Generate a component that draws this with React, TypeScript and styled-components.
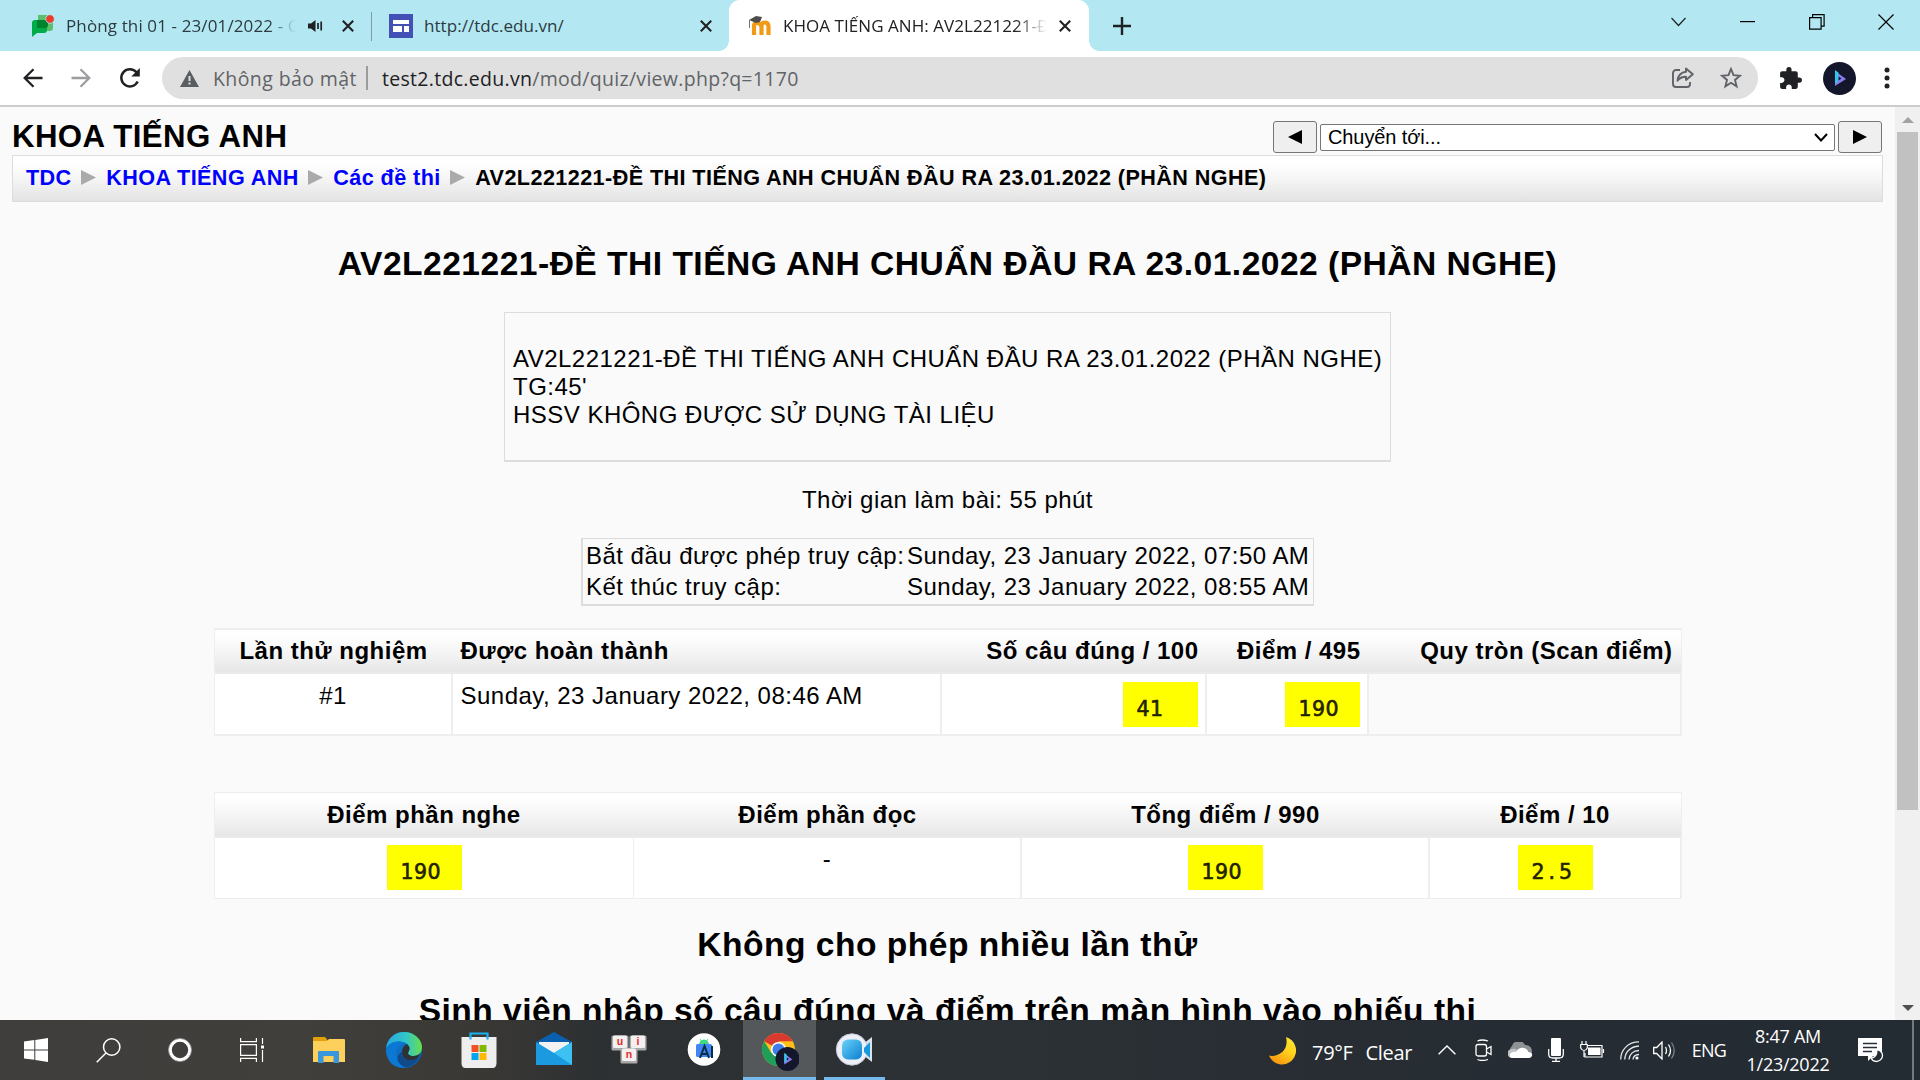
import React from "react";
import styled, { createGlobalStyle } from "styled-components";

const ARIAL = '"Liberation Sans", Arial, sans-serif';
const SEGOE = '"Open Sans", "Noto Sans", sans-serif';

const GlobalStyle = createGlobalStyle`
  * { box-sizing: border-box; }
  body { margin: 0; background: #fafafa; overflow: hidden; }
  svg { display: block; flex: none; }
`;

const Screen = styled.div`
  width: 1920px;
  height: 1080px;
  display: flex;
  flex-direction: column;
  overflow: hidden;
  background: #fafafa;
`;

/* ---------- browser chrome ---------- */

const TabStrip = styled.div`
  height: 51px;
  flex: none;
  display: flex;
  background: #b3e8f2;
  font-family: ${SEGOE};
  font-size: 17px;
  color: #2b3a3f;
`;

const Tab = styled.div<{ $w: number; $pad: number }>`
  width: ${(p) => p.$w}px;
  padding-left: ${(p) => p.$pad}px;
  height: 51px;
  display: flex;
  align-items: center;
`;

const ActiveTab = styled(Tab)`
  position: relative;
  background: #fff;
  border-radius: 11px 11px 0 0;
  color: #202124;
  &::before,
  &::after {
    content: "";
    position: absolute;
    bottom: 0;
    width: 10px;
    height: 10px;
  }
  &::before {
    left: -10px;
    background: radial-gradient(circle at 0 0, transparent 9.5px, #fff 10px);
  }
  &::after {
    right: -10px;
    background: radial-gradient(circle at 100% 0, transparent 9.5px, #fff 10px);
  }
`;

const TabTitle = styled.span<{ $w: number; $ls?: number; $fade?: boolean }>`
  width: ${(p) => p.$w}px;
  flex: none;
  margin-left: 11px;
  line-height: 24px;
  white-space: nowrap;
  overflow: hidden;
  letter-spacing: ${(p) => p.$ls ?? 0}px;
  ${(p) => p.$fade && "mask-image: linear-gradient(90deg, #000 88%, transparent);"}
`;

const TabDivider = styled.div`
  width: 1px;
  height: 29px;
  margin-top: 12px;
  background: #7f9da4;
`;

const NewTab = styled.div`
  width: 66px;
  display: flex;
  align-items: center;
  justify-content: center;
`;

const WindowButtons = styled.div`
  margin-left: auto;
  display: flex;
  height: 43px;
`;

const WindowButton = styled.div`
  width: 69px;
  display: flex;
  align-items: center;
  justify-content: center;
`;

const Toolbar = styled.div`
  height: 56px;
  flex: none;
  display: flex;
  align-items: flex-start;
  padding: 6px 0 0 9px;
  background: #fff;
  border-bottom: 2px solid #cdcdcd;
  font-family: ${SEGOE};
  font-size: 19.5px;
`;

const ToolSlot = styled.div<{ $w: number }>`
  width: ${(p) => p.$w}px;
  height: 42px;
  flex: none;
  display: flex;
  align-items: center;
  justify-content: center;
`;

const Omnibox = styled.div`
  width: 1596px;
  height: 42px;
  margin-left: 8px;
  padding-left: 18px;
  display: flex;
  align-items: center;
  background: #e0e0e0;
  border-radius: 21px;
  color: #616467;
  white-space: nowrap;
`;

const Security = styled.span`
  width: 153px;
  margin-left: 14px;
  letter-spacing: 0.4px;
`;

const OmniDivider = styled.div`
  width: 2px;
  height: 24px;
  margin-right: 14px;
  background: #9c9c9c;
`;

const Url = styled.span`
  letter-spacing: 0.3px;
  b { font-weight: 400; color: #202124; }
`;

const OmniActions = styled.div`
  margin-left: auto;
  padding-right: 3px;
  display: flex;
`;

/* ---------- page ---------- */

const Viewport = styled.div`
  height: 913px;
  flex: none;
  display: flex;
  overflow: hidden;
`;

const Page = styled.main`
  width: 1895px;
  padding: 0 12px;
  display: flex;
  flex-direction: column;
  align-items: center;
  font-family: ${ARIAL};
  font-size: 24px;
  line-height: 28px;
  letter-spacing: 0.48px;
  color: #000;
  white-space: nowrap;
`;

const PageHeader = styled.header`
  width: 100%;
  height: 48px;
  flex: none;
  display: flex;
  justify-content: space-between;
`;

const SiteTitle = styled.h1`
  margin: 12px 0 0;
  font-size: 31.2px;
  line-height: 36px;
  letter-spacing: 0.4px;
`;

const JumpMenu = styled.div`
  display: flex;
  align-items: center;
  gap: 3px;
  height: 32px;
  margin: 14px 1px 0 0;
`;

const JumpButton = styled.button`
  width: 44px;
  height: 32px;
  padding: 0;
  display: flex;
  align-items: center;
  justify-content: center;
  background: #efefef;
  border: 1px solid #767676;
  border-radius: 3px;
`;

const JumpSelect = styled.div`
  width: 515px;
  height: 27px;
  padding: 0 6px 0 7px;
  display: flex;
  align-items: center;
  justify-content: space-between;
  background: #fff;
  border: 1px solid #767676;
  border-radius: 2px;
  font-size: 20px;
  line-height: 24px;
  letter-spacing: -0.1px;
`;

const Breadcrumb = styled.nav`
  width: 100%;
  height: 47px;
  flex: none;
  display: flex;
  padding: 9px 0 0 13px;
  border: 1px solid #ddd;
  background: linear-gradient(#fff 15%, #f7f7f7 45%, #e3e3e3);
  font-size: 21.6px;
  line-height: 26px;
  font-weight: bold;
  letter-spacing: 0.42px;
  svg { margin: 5px 10px 0 9.5px; }
`;

const Crumb = styled.span<{ $link?: boolean }>`
  color: ${(p) => (p.$link ? "#0000ff" : "#000")};
`;

const Heading = styled.h2<{ $top: number }>`
  margin: ${(p) => p.$top}px 0 0;
  flex: none;
  font-size: 33.6px;
  line-height: 40px;
`;

const Intro = styled.section`
  width: 887px;
  height: 150px;
  flex: none;
  margin-top: 28px;
  padding: 32px 0 0 8px;
  border: 1px solid #ddd;
  border-bottom-width: 2px;
`;

const TimeLimit = styled.p`
  margin: 24px 0;
  flex: none;
`;

const Dates = styled.dl`
  width: 733px;
  height: 68px;
  flex: none;
  margin: 0;
  padding: 3px 0 0 3px;
  display: grid;
  grid-template-columns: 321px 1fr;
  grid-auto-rows: 31px;
  border: 1px solid #ddd;
  border-left-width: 2px;
  border-bottom-width: 2px;
  dt, dd { margin: 0; }
`;

const Table = styled.div<{ $cols: string; $line: number; $top: number; $h: number; $head: number }>`
  width: 1468px;
  height: ${(p) => p.$h}px;
  flex: none;
  margin-top: ${(p) => p.$top}px;
  display: grid;
  grid-template-columns: ${(p) => p.$cols};
  grid-template-rows: ${(p) => p.$head}px 1fr;
  border: 1px solid #eee;
  border-top-width: ${(p) => p.$line}px;
  border-bottom-width: ${(p) => p.$line}px;
  background: linear-gradient(#fff 10%, #f5f5f5 50%, #e5e5e5) top / 100% ${(p) => p.$head}px no-repeat;
`;

type Align = "left" | "center" | "right";

const Head = styled.div<{ $align: Align; $pad: number }>`
  padding: ${(p) => p.$pad}px 8px 0;
  text-align: ${(p) => p.$align};
  font-weight: bold;
  border-bottom: 2px solid #ebebeb;
`;

const Cell = styled.div<{ $align: Align; $pad: number; $empty?: boolean; $line?: number }>`
  padding: ${(p) => p.$pad}px 7px 0 8px;
  display: flex;
  justify-content: ${(p) => (p.$align === "left" ? "flex-start" : p.$align === "right" ? "flex-end" : "center")};
  background: ${(p) => (p.$empty ? "#fafafa" : "#fff")};
  border-right: ${(p) => p.$line ?? 2}px solid #eee;
  &:last-child { border-right-width: 1px; }
`;

const Score = styled.span<{ $ls?: number }>`
  width: 75px;
  height: 45px;
  padding: 15px 0 0 14px;
  background: #ff0;
  color: #222200;
  font-family: "DejaVu Sans", sans-serif;
  font-size: 20.5px;
  line-height: 25px;
  letter-spacing: ${(p) => p.$ls ?? 0.5}px;
  -webkit-text-stroke: 0.6px #222200;
`;

const Scrollbar = styled.aside`
  width: 25px;
  height: 913px;
  padding: 10px 0 9px;
  display: flex;
  flex-direction: column;
  align-items: center;
  background: #f0f0f0;
`;

const Thumb = styled.div`
  width: 21px;
  height: 678px;
  margin: 9px 0 auto;
  background: #c1c1c1;
`;

/* ---------- taskbar ---------- */

const Taskbar = styled.footer`
  height: 60px;
  flex: none;
  display: flex;
  background: linear-gradient(90deg, #3f3e3c 0, #403f3c 16%, #3a3835 25%, #2d3032 31%, #2c3135 50%, #272d33 70%, #232b33 100%);
  color: #fff;
  font-family: ${SEGOE};
`;

const SystemSlot = styled.div`
  width: 72px;
  display: flex;
  align-items: center;
  justify-content: center;
`;

const Apps = styled.div`
  display: flex;
  margin-left: 3.5px;
`;

const AppSlot = styled.div<{ $active?: boolean; $running?: boolean }>`
  width: 73px;
  margin: 0 1px;
  display: flex;
  flex-direction: column;
  align-items: center;
  justify-content: space-between;
  padding-top: 9px;
  background: ${(p) => (p.$active ? "#54585b" : "transparent")};
  &::after {
    content: "";
    width: ${(p) => (p.$active ? 73 : 61)}px;
    height: 3px;
    background: ${(p) => (p.$active || p.$running ? "#76b9ed" : "transparent")};
  }
`;

const Tray = styled.div`
  margin-left: auto;
  display: flex;
  align-items: center;
`;

const Weather = styled.div`
  width: 161px;
  display: flex;
  align-items: center;
  font-size: 20px;
  white-space: nowrap;
  svg { margin-right: 15px; }
  span { margin-right: 13px; padding-top: 4px; letter-spacing: -0.3px; }
`;

const TrayIcon = styled.div<{ $w: number }>`
  width: ${(p) => p.$w}px;
  display: flex;
  justify-content: center;
`;

const Language = styled.span`
  width: 48px;
  margin-left: 4px;
  text-align: center;
  font-size: 18px;
  letter-spacing: -0.7px;
`;

const Clock = styled.div`
  width: 110px;
  margin-right: 1px;
  text-align: center;
  font-size: 18px;
  line-height: 28px;
  letter-spacing: -0.25px;
  white-space: nowrap;
`;

const Peek = styled.div`
  width: 8px;
  height: 60px;
  margin-left: 15px;
  border-left: 2px solid #74797d;
`;

/* ---------- drawings ---------- */

const CloseIcon = () => (
  <svg width="12" height="12" viewBox="0 0 12 12" stroke="#202124" strokeWidth="2.1"><path d="M.8.8l10.4 10.4M11.2.8L.8 11.2" /></svg>
);
const ChatIcon = () => (
  <svg width="24" height="24" viewBox="0 0 24 24">
    <path d="M7 1h12a3 3 0 013 3v10a3 3 0 01-3 3H7z" fill="#5bc06e" />
    <path d="M1 9a3 3 0 013-3h12v10a3 3 0 01-3 3H6l-5 4z" fill="#00ac47" />
    <path d="M6 6h11v5a3 3 0 01-3 3H6z" fill="#00832d" />
    <circle cx="19" cy="5" r="4.3" fill="#ea3b2d" stroke="#b3e8f2" strokeWidth=".8" />
  </svg>
);
const AudioIcon = () => (
  <svg width="15" height="12" viewBox="0 0 15 12"><path d="M0 3.5h3L7.5 0v12L3 8.500H0z" fill="#202124" /><path d="M10 3v6M13.200 1.500v9" stroke="#202124" strokeWidth="1.700" /></svg>
);
const SitesIcon = () => (
  <svg width="24" height="24" viewBox="0 0 24 24"><path fill="#4350b5" d="M0 0h24v24H0z" /><path fill="#fff" d="M4 6h16v4H4zM4 12h9v6H4zM15 12h5v6h-5z" /></svg>
);
const MoodleIcon = () => (
  <svg width="24" height="21" viewBox="0 0 24 21">
    <path d="M6 20V11q0-3 3-3t4.500 3v9M13.500 11q0-3.500 3.300-3.500T20.500 11v9" fill="none" stroke="#f09a16" strokeWidth="4.200" />
    <path d="M1 5l7-4 6 1-2 5-4 1z" fill="#4d4d4d" /><path d="M1.500 5v8" stroke="#777" strokeWidth="1" />
  </svg>
);
const Arrow = ({ flip, color }: { flip?: boolean; color: string }) => (
  <svg width="20" height="20" viewBox="0 0 20 20" fill="none" stroke={color} strokeWidth="2.3" transform={flip ? "scale(-1 1)" : undefined}><path d="M19.500 10H2M10.500 1.200L1.700 10l8.800 8.800" /></svg>
);
const ReloadIcon = () => (
  <svg width="22" height="22" viewBox="0 0 22 22"><path d="M18.700 14.500A8.600 8.600 0 1117.500 5.300" fill="none" stroke="#202124" strokeWidth="2.500" /><path d="M20.800 1v8.500h-8.500z" fill="#202124" /></svg>
);
const WarningIcon = () => (
  <svg width="19" height="17" viewBox="0 0 19 17"><path d="M9.500 0L19 17H0z" fill="#5a5d61" /><path d="M9.500 6v5M9.500 12.500v2" stroke="#e0e0e0" strokeWidth="2" /></svg>
);
const ShareIcon = () => (
  <svg width="22" height="22" viewBox="0 0 22 22" fill="none" stroke="#606367" strokeWidth="1.900" strokeLinejoin="round">
    <path d="M8 3H4a3 3 0 00-3 3v11a3 3 0 003 3h11a3 3 0 003-3v-2" /><path d="M14 1.500L20.800 7.300 14 13V9.800c-4 0-6.500 1.200-8.500 4 .5-5 3.500-8.500 8.500-9z" />
  </svg>
);
const StarIcon = () => (
  <svg width="22" height="22" viewBox="0 0 22 22"><path d="M11 2l2.500 6.200 6.500.5-5 4.200 1.600 6.500L11 15.800l-5.600 3.600L7 12.900 2 8.700l6.500-.5z" fill="none" stroke="#5f6368" strokeWidth="1.900" /></svg>
);
const PuzzleIcon = () => (
  <svg width="25" height="25" viewBox="0 0 24 24"><path fill="#202124" d="M20.500 11H19V7c0-1.100-.9-2-2-2h-4V3.500a2.500 2.500 0 00-5 0V5H4c-1.100 0-1.990.9-1.990 2v3.800H3.500c1.490 0 2.700 1.210 2.700 2.700s-1.210 2.700-2.700 2.700H2V20c0 1.100.9 2 2 2h3.800v-1.500c0-1.490 1.210-2.700 2.700-2.700s2.700 1.210 2.700 2.700V22H17c1.100 0 2-.9 2-2v-4h1.500a2.500 2.500 0 000-5z" /></svg>
);
const PlayMark = () => (
  <>
    <path d="M12 9v15l11-7z" fill="#8a7cf0" /><path d="M12 8l3.500 2.500v8L12 22z" fill="#2fc6ea" /><path d="M15.500 14.500v4l3-2z" fill="#14162b" />
  </>
);
const Avatar = () => (
  <svg width="33" height="33" viewBox="0 0 33 33"><circle cx="16.500" cy="16.500" r="16.500" fill="#14162b" /><PlayMark /></svg>
);
const Triangle = ({ w, h, color, dir }: { w: number; h: number; color: string; dir: "left" | "right" | "up" | "down" }) => {
  const points = {
    left: `${w},0 0,${h / 2} ${w},${h}`,
    right: `0,0 ${w},${h / 2} 0,${h}`,
    up: `0,${h} ${w / 2},0 ${w},${h}`,
    down: `0,0 ${w},0 ${w / 2},${h}`,
  }[dir];
  return <svg width={w} height={h}><polygon points={points} fill={color} /></svg>;
};

const FolderIcon = () => (
  <svg width="36" height="42" viewBox="0 0 36 42">
    <path d="M2 9q0-1 1-1h11l2.500 3H34v6H2z" fill="#e3a008" /><path d="M2 12h14l2-2h15q1 0 1 1v22H2z" fill="#fdd05c" />
    <path d="M7 34V23q0-1 1-1h19q1 0 1 1v11h-5.500v-7h-10v7z" fill="#3a96dd" />
  </svg>
);
const EdgeIcon = () => (
  <svg width="36" height="42" viewBox="0 0 36 42">
    <defs>
      <linearGradient id="edgeTop" x1="0" x2="1"><stop offset="0" stopColor="#2aa5e0" /><stop offset=".55" stopColor="#31c5c9" /><stop offset="1" stopColor="#66e04b" /></linearGradient>
      <linearGradient id="edgeLow" x1="0" x2="1" y2="1"><stop offset="0" stopColor="#0f7fd8" /><stop offset="1" stopColor="#0c59a4" /></linearGradient>
    </defs>
    <circle cx="18" cy="21" r="18" fill="url(#edgeLow)" />
    <path d="M0 20C1 9 9 3 18 3c11 0 18 8 18 15 0 6-4 9-8.500 9-4 0-5.500-1.500-5.500-3 0-1.200 1.500-2 1.500-4.500 0-4-4.500-7-10-7C7 12.500 2 15 0 20z" fill="url(#edgeTop)" />
    <path d="M0 20c2-5 7-7.500 13-7.500 3 0 5.500 1 7.500 2.500-6-1-10.500 3.500-10.500 9.500 0 7 5 12 11 13.500C9 41 0 33 0 20z" fill="#0b78d4" />
    <path d="M20.500 15c2 1.300 3 2.800 3 4.500 0 2.500-1.500 3.300-1.500 4.500 0 1.500 1.500 3 5.500 3 3 0 5-1 6.500-2.500-1 4-5 7-9 7-6 0-9-4-9-8.500 0-3.500 2-6.500 4.500-8z" fill="#2f3234" />
    <path d="M16 23c0 4.500 3 8.500 9 8.500 3.500 0 6.500-1.500 8.500-4-3 8-12 12.500-17 9.500-7-4-6-12-.5-14z" fill="#114a8b" />
  </svg>
);
const StoreIcon = () => (
  <svg width="36" height="42" viewBox="0 0 36 42">
    <path d="M9.500 10V4.500h17V10" fill="none" stroke="#1ab2ee" strokeWidth="2.200" />
    <path d="M.5 8h35v26q0 5-4 5h-27q-4 0-4-5z" fill="#eeeeee" /><path d="M9.500 8v2.500M26.500 8v2.500" stroke="#1ab2ee" strokeWidth="2.200" />
    <path fill="#f25022" d="M10.500 16h7v7h-7z" /><path fill="#7fba00" d="M18.500 16h7v7h-7z" /><path fill="#00a4ef" d="M10.500 24h7v7h-7z" /><path fill="#ffb900" d="M18.500 24h7v7h-7z" />
  </svg>
);
const MailIcon = () => (
  <svg width="36" height="42" viewBox="0 0 36 42">
    <path d="M0 13L18 3l18 10v6H0z" fill="#0a5fae" /><path d="M3 13h30v13H3z" fill="#f2f2f2" />
    <path d="M0 13l18 11L36 13v23H0z" fill="#1b9ae0" /><path d="M36 13v23L18 24z" fill="#3cc1f2" />
  </svg>
);
const Key = ({ x, y, label }: { x: number; y: number; label: string }) => (
  <g transform={`translate(${x} ${y})`}>
    <rect width="17" height="15" rx="1.500" fill="#a9a9a9" /><rect x="1.500" width="14" height="12.500" rx="1.500" fill="#f3f0ef" />
    <text x="8.500" y="9.500" textAnchor="middle" fontFamily="Liberation Sans" fontWeight="bold" fontSize="10.500" fill="#e8282b">{label}</text>
  </g>
);
const KeysIcon = () => (
  <svg width="36" height="42" viewBox="0 0 36 42"><Key x={0.5} y={6.500} label="u" /><Key x={18.500} y={6.500} label="i" /><Key x={9.500} y={19.500} label="n" /></svg>
);
const StudioIcon = () => (
  <svg width="36" height="42" viewBox="0 0 36 42">
    <circle cx="18" cy="20.500" r="16.300" fill="#fff" /><path d="M13 16a5 5.500 0 0110 0z" fill="#3ddc84" /><path d="M14 10l1.500 2M22 10l-1.500 2" stroke="#3ddc84" strokeWidth="1" />
    <rect x="10" y="15" width="16" height="13" rx="1.500" fill="#4285f4" />
    <path d="M14 29l4.500-12L23 29M16 25h5M26 17v12" fill="none" stroke="#073042" strokeWidth="2" />
  </svg>
);
const ChromeIcon = () => (
  <svg width="40" height="44" viewBox="0 0 40 44">
    <circle cx="19.500" cy="20.500" r="16.500" fill="#fbc116" />
    <path d="M19.500 20.500L5.200 12.200A16.500 16.500 0 0119.500 4a16.500 16.500 0 0114.300 8.200H19.500z" fill="#d93a30" />
    <path d="M5.200 12.200A16.500 16.500 0 0019.500 37l7-12.500-14.200-.5z" fill="#1e9e57" />
    <circle cx="19.500" cy="20.500" r="7.600" fill="#fff" /><circle cx="19.500" cy="20.500" r="6" fill="#3f7ee8" />
    <g transform="translate(16.500 18) scale(.73)"><circle cx="16.500" cy="16.500" r="16.500" fill="#14162b" /><PlayMark /></g>
  </svg>
);
const CameraIcon = () => (
  <svg width="38" height="42" viewBox="0 0 38 42">
    <defs><linearGradient id="lens" y2="1" x2="1"><stop offset="0" stopColor="#6bd3f8" /><stop offset="1" stopColor="#087fd0" /></linearGradient></defs>
    <path d="M37 8v25l-9-7v-11z" fill="#d9e2ef" /><circle cx="17" cy="20.500" r="15.700" fill="#eceef8" stroke="#c4c9dc" strokeWidth="1" />
    <rect x="7" y="10.500" width="20" height="20" rx="6" fill="url(#lens)" /><path d="M35 13v16l-6-6v-4z" fill="#1798de" />
  </svg>
);

const apps = [
  { icon: <FolderIcon /> }, { icon: <EdgeIcon /> }, { icon: <StoreIcon /> }, { icon: <MailIcon /> },
  { icon: <KeysIcon /> }, { icon: <StudioIcon /> }, { icon: <ChromeIcon />, active: true }, { icon: <CameraIcon />, running: true },
];

const SystemIcons = () => (
  <>
    <SystemSlot><svg width="24" height="24" fill="#fff"><path d="M0 3.500l10.300-1.400v9.300H0zM11.300 2L24 0v11.400H11.300zM0 12.400h10.300v9.300L0 20.400zM11.300 12.400H24V24l-12.700-1.900z" /></svg></SystemSlot>
    <SystemSlot><svg width="25" height="25" fill="none" stroke="#fff" strokeWidth="1.500"><circle cx="15.700" cy="9" r="8.200" /><path d="M10 15L.7 24.300" /></svg></SystemSlot>
    <SystemSlot><svg width="24" height="24" fill="none" stroke="#fff"><circle cx="12" cy="12" r="9.700" strokeWidth="3" /><circle cx="12" cy="12" r="11.500" stroke="#aaa" strokeWidth=".8" /></svg></SystemSlot>
    <SystemSlot><svg width="25" height="24" fill="none" stroke="#fff" strokeWidth="1.200"><path d="M.6 0v3.600h15.800V0M.6 6.600h15.800v10.800H.6zM.6 24v-3.600h15.800V24M22.500 0v6M22.500 12v12" /><path d="M21 7.500h3v3h-3z" fill="#fff" stroke="none" /></svg></SystemSlot>
  </>
);

const TrayIcons = () => (
  <>
    <TrayIcon $w={36}><svg width="18" height="10" fill="none" stroke="#fff" strokeWidth="1.400"><path d="M.6 9.300L9 1l8.400 8.300" /></svg></TrayIcon>
    <TrayIcon $w={38}><svg width="18" height="22" fill="none" stroke="#fff" strokeWidth="1.300"><rect x="1" y="5.500" width="10.500" height="11.500" rx="2" /><path d="M11.500 10l4.500-2.500v8L11.500 13M2.500 2Q7 0 13 2M2.500 20.500q4.500 2 10.500 0" /></svg></TrayIcon>
    <TrayIcon $w={35}><svg width="25" height="17"><path d="M4 12a5 5 0 010-8 7 7 0 0113-1 6 6 0 016 9z" fill="#8f9295" /><path d="M4 16a4.500 4.500 0 010-9q3-1 5 1l7 8z" fill="#bfc1c2" /><path d="M4 16q-3-1-2-4 2-3 6-2 3-5 8-4 4 1 4 4 5 0 4 4-1 2-3 2z" fill="#fff" /></svg></TrayIcon>
    <TrayIcon $w={35}><svg width="16" height="24"><rect x="3" width="10" height="18" rx="1" fill="#fff" /><path d="M.7 11v5q0 4 4 4h6.600q4 0 4-4v-5M8 20v3.300M4 23.300h8" fill="none" stroke="#fff" strokeWidth="1.300" /></svg></TrayIcon>
    <TrayIcon $w={38}><svg width="25" height="18" fill="none" stroke="#fff" strokeWidth="1.200"><path d="M7 4.500h15v11.500H5V12M23.500 8v4" /><path d="M8 6.500h12.500V14H8z" fill="#fff" stroke="none" /><path d="M2 0v3M6 0v3M.7 3.500h6.600V7Q6 9.500 4 9.500T.7 7z M4 9.500V16" /></svg></TrayIcon>
    <TrayIcon $w={37}><svg width="20" height="19" fill="none" stroke="#e4e6e8" strokeWidth="1.300"><path d="M.7 18.500C.7 9 8 .8 19 .8M4.800 18.500C5 11.500 10 5.500 19 5M9 18.500c.3-5 4-9 10-9M13 18.500c.3-3 2-4.800 6-5" /><circle cx="17" cy="17" r="1.600" fill="#fff" stroke="none" /></svg></TrayIcon>
    <TrayIcon $w={33}><svg width="23" height="19" fill="none" stroke="#fff" strokeWidth="1.300"><path d="M.7 6.500h3L9 1v17l-5.300-5.500h-3zM12.500 6q2 3.500 0 7M15.500 3.500q4 6 0 12" /><path d="M18.500 1.500q5.500 8 0 16" stroke="#7a8085" /></svg></TrayIcon>
  </>
);

export default function App() {
  return (
    <>
      <GlobalStyle />
      <Screen>
        <TabStrip>
          <Tab $w={371} $pad={31}>
            <ChatIcon />
            <TabTitle $w={230} $ls={0.12} $fade>Phòng thi 01 - 23/01/2022 - G</TabTitle>
            <ToolSlot $w={38}><AudioIcon /></ToolSlot>
            <ToolSlot $w={28}><CloseIcon /></ToolSlot>
          </Tab>
          <TabDivider />
          <Tab $w={357} $pad={17}>
            <SitesIcon />
            <TabTitle $w={264} $ls={0.05}>http://tdc.edu.vn/</TabTitle>
            <ToolSlot $w={36}><CloseIcon /></ToolSlot>
          </Tab>
          <ActiveTab $w={360} $pad={19}>
            <MoodleIcon />
            <TabTitle $w={264} $ls={0.05} $fade>KHOA TIẾNG ANH: AV2L221221-ĐỀ</TabTitle>
            <ToolSlot $w={36}><CloseIcon /></ToolSlot>
          </ActiveTab>
          <NewTab><svg width="18" height="18" stroke="#202124" strokeWidth="2.400"><path d="M9 0v18M0 9h18" /></svg></NewTab>
          <WindowButtons>
            <WindowButton><svg width="15" height="10" fill="none" stroke="#222" strokeWidth="1.200"><path d="M.5 1l7 7.500 7-7.500" /></svg></WindowButton>
            <WindowButton><svg width="15" height="2"><path d="M0 0h15v1.200H0z" /></svg></WindowButton>
            <WindowButton><svg width="16" height="16" fill="none" stroke="#000" strokeWidth="1.200"><path d="M.6 3.600h11.500v11.500H.6zM3.600 3.600v-3h11.500v11.500h-3" /></svg></WindowButton>
            <WindowButton><svg width="16" height="16" stroke="#000" strokeWidth="1.200"><path d="M.5.5l15 15M15.500.5l-15 15" /></svg></WindowButton>
          </WindowButtons>
        </TabStrip>

        <Toolbar>
          <ToolSlot $w={48}><Arrow color="#202124" /></ToolSlot>
          <ToolSlot $w={48}><Arrow flip color="#9b9da0" /></ToolSlot>
          <ToolSlot $w={49}><ReloadIcon /></ToolSlot>
          <Omnibox>
            <WarningIcon />
            <Security>Không bảo mật</Security>
            <OmniDivider />
            <Url><b>test2.tdc.edu.vn</b>/mod/quiz/view.php?q=1170</Url>
            <OmniActions>
              <ToolSlot $w={48}><ShareIcon /></ToolSlot>
              <ToolSlot $w={48}><StarIcon /></ToolSlot>
            </OmniActions>
          </Omnibox>
          <ToolSlot $w={65}><PuzzleIcon /></ToolSlot>
          <ToolSlot $w={32}><Avatar /></ToolSlot>
          <ToolSlot $w={63}><svg width="6" height="22" fill="#202124"><circle cx="3" cy="3" r="2.500" /><circle cx="3" cy="11" r="2.500" /><circle cx="3" cy="19" r="2.500" /></svg></ToolSlot>
        </Toolbar>

        <Viewport>
          <Page>
            <PageHeader>
              <SiteTitle>KHOA TIẾNG ANH</SiteTitle>
              <JumpMenu>
                <JumpButton><Triangle w={14} h={14} color="#000" dir="left" /></JumpButton>
                <JumpSelect>
                  Chuyển tới...
                  <svg width="14" height="9" fill="none" stroke="#000" strokeWidth="2"><path d="M1 1l6 6.500L13 1" /></svg>
                </JumpSelect>
                <JumpButton><Triangle w={14} h={14} color="#000" dir="right" /></JumpButton>
              </JumpMenu>
            </PageHeader>
            <Breadcrumb>
              <Crumb $link>TDC</Crumb>
              <Triangle w={15} h={15} color="#aaa" dir="right" />
              <Crumb $link>KHOA TIẾNG ANH</Crumb>
              <Triangle w={15} h={15} color="#aaa" dir="right" />
              <Crumb $link>Các đề thi</Crumb>
              <Triangle w={15} h={15} color="#aaa" dir="right" />
              <Crumb>AV2L221221-ĐỀ THI TIẾNG ANH CHUẨN ĐẦU RA 23.01.2022 (PHẦN NGHE)</Crumb>
            </Breadcrumb>

            <Heading $top={42}>AV2L221221-ĐỀ THI TIẾNG ANH CHUẨN ĐẦU RA 23.01.2022 (PHẦN NGHE)</Heading>
            <Intro>
              AV2L221221-ĐỀ THI TIẾNG ANH CHUẨN ĐẦU RA 23.01.2022 (PHẦN NGHE)<br />
              TG:45'<br />
              HSSV KHÔNG ĐƯỢC SỬ DỤNG TÀI LIỆU
            </Intro>
            <TimeLimit>Thời gian làm bài: 55 phút</TimeLimit>
            <Dates>
              <dt>Bắt đầu được phép truy cập:</dt><dd>Sunday, 23 January 2022, 07:50 AM</dd>
              <dt>Kết thúc truy cập:</dt><dd>Sunday, 23 January 2022, 08:55 AM</dd>
            </Dates>

            <Table $cols="238px 489px 265px 162px 1fr" $line={2} $top={22} $h={108} $head={44}>
              <Head $align="center" $pad={7}>Lần thử nghiệm</Head>
              <Head $align="left" $pad={7}>Được hoàn thành</Head>
              <Head $align="right" $pad={7}>Số câu đúng / 100</Head>
              <Head $align="right" $pad={7}>Điểm / 495</Head>
              <Head $align="right" $pad={7}>Quy tròn (Scan điểm)</Head>
              <Cell $align="center" $pad={8}>#1</Cell>
              <Cell $align="left" $pad={8}>Sunday, 23 January 2022, 08:46 AM</Cell>
              <Cell $align="right" $pad={8}><Score>41</Score></Cell>
              <Cell $align="right" $pad={8}><Score>190</Score></Cell>
              <Cell $align="right" $pad={8} $empty />
            </Table>

            <Table $cols="419px 388px 408px 1fr" $line={1} $top={56} $h={107} $head={45}>
              <Head $align="center" $pad={8}>Điểm phần nghe</Head>
              <Head $align="center" $pad={8}>Điểm phần đọc</Head>
              <Head $align="center" $pad={8}>Tổng điểm / 990</Head>
              <Head $align="center" $pad={8}>Điểm / 10</Head>
              <Cell $align="center" $pad={7} $line={1}><Score>190</Score></Cell>
              <Cell $align="center" $pad={7}>-</Cell>
              <Cell $align="center" $pad={7}><Score>190</Score></Cell>
              <Cell $align="center" $pad={7}><Score $ls={4}>2.5</Score></Cell>
            </Table>

            <Heading $top={26}>Không cho phép nhiều lần thử</Heading>
            <Heading $top={26}>Sinh viên nhập số câu đúng và điểm trên màn hình vào phiếu thi</Heading>
          </Page>
          <Scrollbar>
            <Triangle w={12} h={6} color="#a3a3a3" dir="up" />
            <Thumb />
            <Triangle w={12} h={6} color="#505050" dir="down" />
          </Scrollbar>
        </Viewport>

        <Taskbar>
          <SystemIcons />
          <Apps>
            {apps.map((app, i) => (
              <AppSlot key={i} $active={app.active} $running={app.running}>{app.icon}</AppSlot>
            ))}
          </Apps>
          <Tray>
            <Weather>
              <svg width="29" height="29" viewBox="0 0 29 29">
                <defs><linearGradient id="moon" x1="1" x2=".4" y2="1"><stop offset="0" stopColor="#ffe93b" /><stop offset=".5" stopColor="#ffd21c" /><stop offset="1" stopColor="#f99a10" /></linearGradient></defs>
                <path d="M18 1a14 14 0 11-17 18.500q4 1 8-.5C17 16 20 9 18 1z" fill="url(#moon)" />
              </svg>
              <span>79°F</span><span>Clear</span>
            </Weather>
            <TrayIcons />
            <Language>ENG</Language>
            <Clock>8:47 AM<br />1/23/2022</Clock>
            <TrayIcon $w={53}>
              <svg width="26" height="26"><path d="M0 1h24v18h-9l-5 5v-5H0z" fill="#fff" /><path d="M5 6.500h14M5 10.500h14M5 14.500h9" stroke="#27303a" strokeWidth="1.300" /><path d="M19 12.500a6 6 0 11-6 8.500q6 0 6-8.500z" fill="#242c34" stroke="#fff" strokeWidth="1.300" /></svg>
            </TrayIcon>
            <Peek />
          </Tray>
        </Taskbar>
      </Screen>
    </>
  );
}
